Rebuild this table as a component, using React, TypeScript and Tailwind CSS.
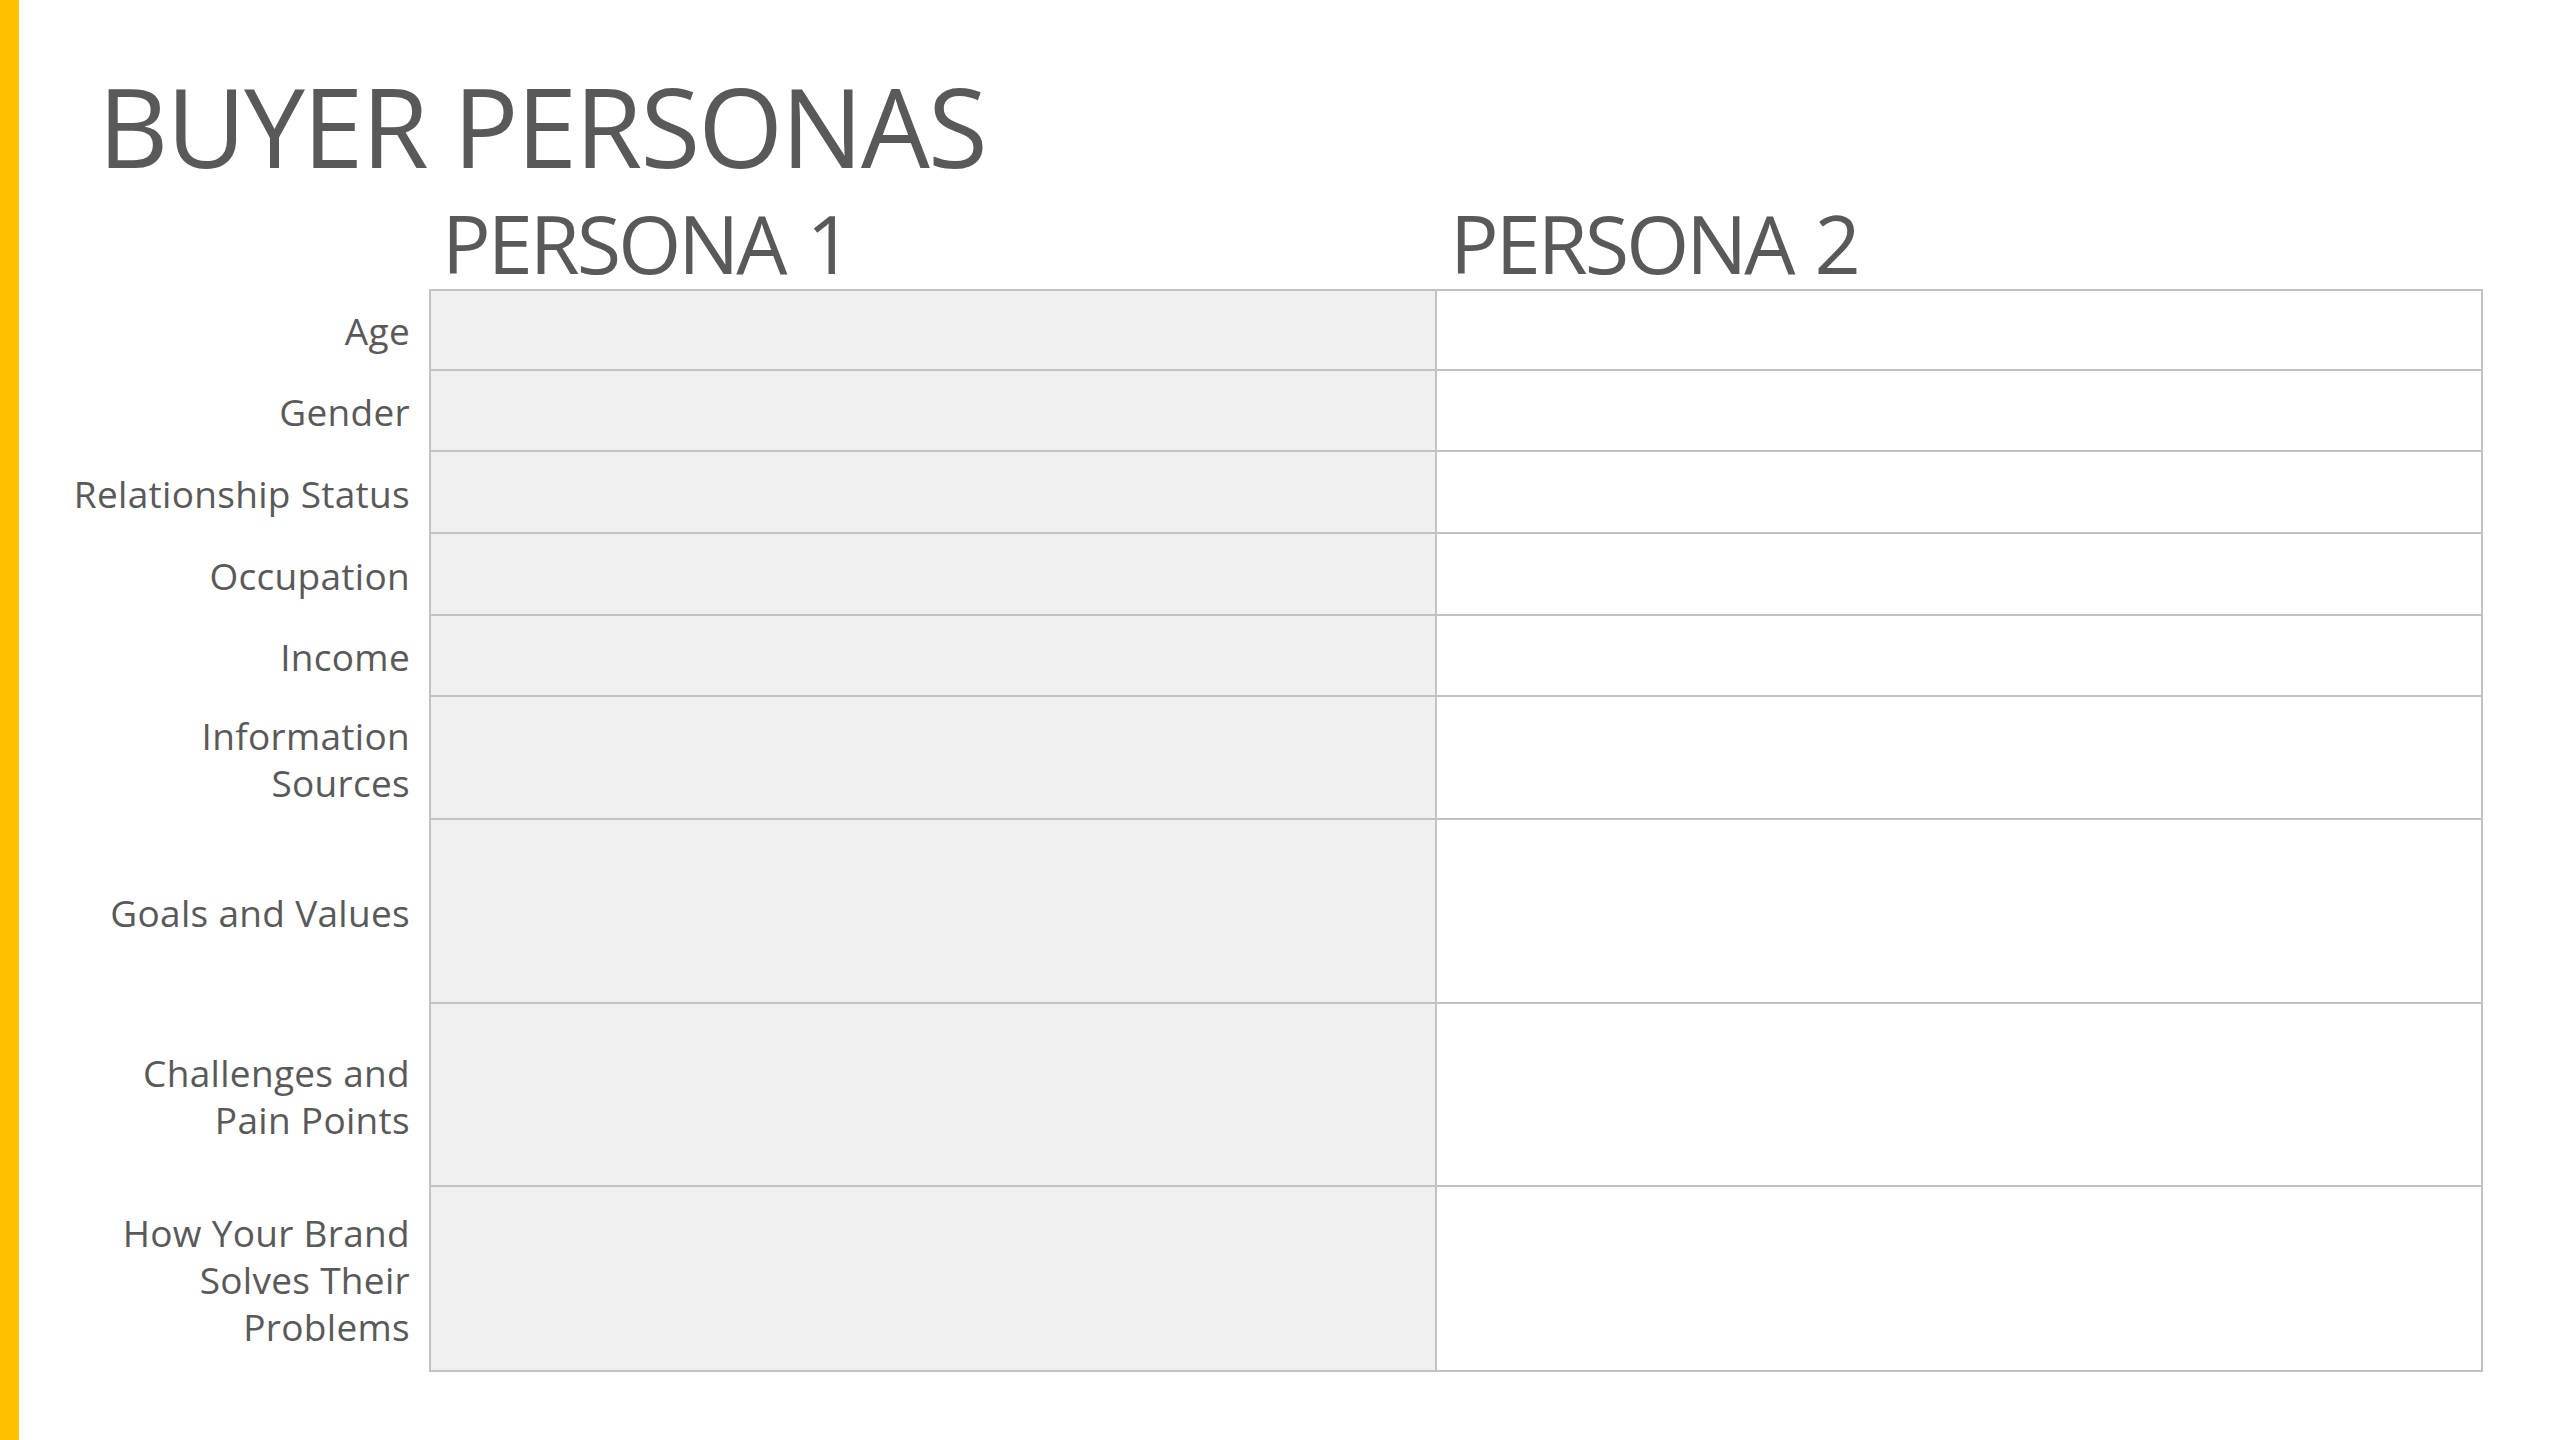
import React from "react";

const rows: { label: string[]; h: string }[] = [
  { label: ["Age"], h: "h-[82px]" },
  { label: ["Gender"], h: "h-[81px]" },
  { label: ["Relationship Status"], h: "h-[82px]" },
  { label: ["Occupation"], h: "h-[82px]" },
  { label: ["Income"], h: "h-[81px]" },
  { label: ["Information", "Sources"], h: "h-[123px]" },
  { label: ["Goals and Values"], h: "h-[184px]" },
  { label: ["Challenges and", "Pain Points"], h: "h-[183px]" },
  { label: ["How Your Brand", "Solves Their", "Problems"], h: "h-[185px]" },
];

export default function App() {
  return (
    <div
      className="flex w-[2560px] h-[1440px] bg-white overflow-hidden"
      style={{ fontFamily: '"Open Sans", "DejaVu Sans", sans-serif' }}
    >
      <div className="w-[19px] shrink-0 bg-[#ffc000]" />
      <div className="flex flex-col">
        <h1 className="ml-[79px] mt-[71px] text-[109px] leading-none font-normal text-[#595959] tracking-[-2px]">
          BUYER PERSONAS
        </h1>
        <div className="mt-[22px] grid grid-cols-[410px_1006px_1048px]">
          <div />
          <div className="pl-[13px] pb-[6px] text-[81px] leading-none text-[#595959] tracking-[-3px] [word-spacing:4px]">
            PERSONA 1
          </div>
          <div className="pl-[15px] pb-[6px] text-[81px] leading-none text-[#595959] tracking-[-3px] [word-spacing:4px]">
            PERSONA 2
          </div>
        </div>
        <div className="grid grid-cols-[410px_1006px_1048px]">
          {rows.map((r, i) => (
            <React.Fragment key={i}>
              <div
                className={`${r.h} flex flex-col justify-center items-end pr-[19px] text-[37px] leading-[47px] tracking-[0.3px] text-[#595959] text-right`}
              >
                {r.label.map((l, j) => (
                  <span key={j}>{l}</span>
                ))}
              </div>
              <div
                className={`${r.h} bg-[#f0f0f0] border-[#c2c2c2] border-l-2 border-b-2 ${
                  i === 0 ? "border-t-2" : ""
                }`}
              />
              <div
                className={`${r.h} bg-white border-[#c2c2c2] border-l-2 border-r-2 border-b-2 ${
                  i === 0 ? "border-t-2" : ""
                }`}
              />
            </React.Fragment>
          ))}
        </div>
      </div>
    </div>
  );
}
